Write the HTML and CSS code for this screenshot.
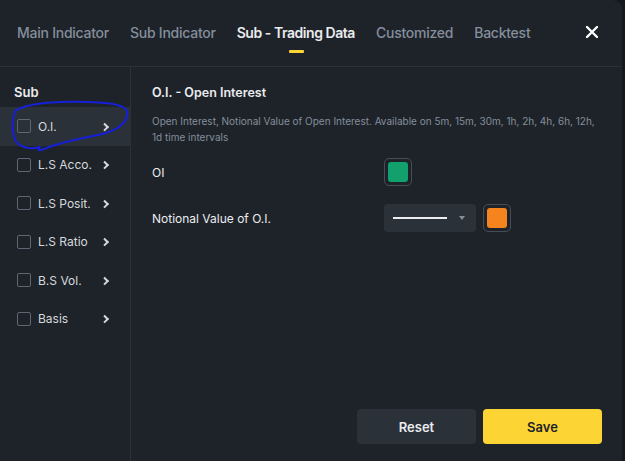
FILE: index.html
```html
<!DOCTYPE html>
<html lang="en">
<head>
  <meta charset="UTF-8">
  <meta name="viewport" content="width=device-width, initial-scale=1.0">
  <title>Sub - Trading Data</title>
  <link rel="stylesheet" href="styles.css">
</head>
<body>

  <div class="modal">

    <!-- Tabs -->
    <header class="tabs">
      <span class="tab">Main Indicator</span>
      <span class="tab">Sub Indicator</span>
      <span class="tab active">Sub - Trading Data</span>
      <span class="tab">Customized</span>
      <span class="tab">Backtest</span>
      <button class="close" aria-label="Close">
        <svg width="14" height="14" viewBox="0 0 14 14"><path d="M2 2L12 12M12 2L2 12" stroke="#fff" stroke-width="2.4" stroke-linecap="round"/></svg>
      </button>
    </header>

    <div class="main">

      <!-- Sidebar -->
      <aside class="side">
        <div class="side-title">Sub</div>
        <div class="item selected"><span class="check"></span><span class="label">O.I.</span><span class="chev"></span></div>
        <div class="item"><span class="check"></span><span class="label">L.S Acco.</span><span class="chev"></span></div>
        <div class="item"><span class="check"></span><span class="label">L.S Posit.</span><span class="chev"></span></div>
        <div class="item"><span class="check"></span><span class="label">L.S Ratio</span><span class="chev"></span></div>
        <div class="item"><span class="check"></span><span class="label">B.S Vol.</span><span class="chev"></span></div>
        <div class="item"><span class="check"></span><span class="label">Basis</span><span class="chev"></span></div>
      </aside>

      <!-- Settings -->
      <section class="content">
        <h2>O.I. - Open Interest</h2>
        <p class="desc">Open Interest, Notional Value of Open Interest. Available on 5m, 15m, 30m, 1h, 2h, 4h, 6h, 12h, 1d time intervals</p>

        <div class="settings">
          <div class="set-label">OI</div>
          <div class="set-ctrl"><span class="swatch"><span class="green"></span></span></div>

          <div class="set-label">Notional Value of O.I.</div>
          <div class="set-ctrl">
            <span class="line-select"><span class="line"></span><span class="caret"></span></span>
            <span class="swatch"><span class="orange"></span></span>
          </div>
        </div>

        <div class="footer">
          <button class="btn reset">Reset</button>
          <button class="btn save">Save</button>
        </div>
      </section>
    </div>
  </div>

  <!-- hand-drawn mark around O.I. -->
  <svg class="scribble" width="140" height="160" viewBox="0 0 140 160">
    <path d="M15 111 C28 102 68 100 106 103 C122 105 129 108 127 116 C125 125 116 131 98 135 C78 139 60 142 44 149 C39 151 37 151 40 147 C30 150 19 147 15 140 C12 131 12 120 15 111 Z" fill="none" stroke="#1620d8" stroke-width="2" stroke-linejoin="round"/>
  </svg>

</body>
</html>
```

FILE: styles.css
```css
body {
  margin: 0;
  background-color: #15181d;
  font-family: Inter, "Noto Sans", sans-serif;
  color: #eaecef;
  overflow: hidden;
  width: 625px;
  height: 461px;
}

.modal {
  width: 622px;
  height: 461px;
  background-color: #1e2329;
  border-radius: 0 9px 0 0;
  display: flex;
  flex-direction: column;
}

/* tabs */

.tabs {
  height: 67px;
  box-sizing: border-box;
  border-bottom: 1px solid #2b3139;
  display: flex;
  align-items: center;
  gap: 21px;
  padding: 0 0 2px 17px;
}

.tab {
  position: relative;
  font-size: 14px;
  font-weight: 500;
  color: #848e9c;
  letter-spacing: -0.25px;
}

.tab.active {
  color: #eaecef;
  font-weight: 600;
  letter-spacing: -0.45px;
}

.tab.active::after {
  content: "";
  position: absolute;
  left: 50%;
  top: 26px;
  width: 15px;
  height: 3px;
  margin-left: -7px;
  background-color: #fcd535;
  border-radius: 1px;
}

.close {
  margin-left: auto;
  margin-right: 23px;
  background: none;
  border: none;
  padding: 0;
  display: flex;
}

.main {
  flex: 1;
  display: flex;
}

/* sidebar */

.side {
  width: 132px;
  border-right: 1px solid #2b3139;
  padding-top: 17px;
}

.side-title {
  font-size: 13px;
  font-weight: 600;
  padding-left: 14px;
  height: 23px;
}

.item {
  height: 38.5px;
  display: flex;
  align-items: center;
  padding-left: 17px;
  font-size: 12px;
  color: #d5d8dc;
}

.item.selected {
  background-color: #2b3139;
}

.check {
  width: 12px;
  height: 12px;
  border: 1px solid #5e6673;
  border-radius: 2px;
  margin-right: 7px;
}

.label {
  flex: 1;
}

.chev {
  width: 3.5px;
  height: 3.5px;
  border-top: 2px solid #d5d8dc;
  border-right: 2px solid #d5d8dc;
  transform: rotate(45deg);
  margin-right: 23px;
}

/* content */

.content {
  flex: 1;
  padding: 18px 20px 17px 21px;
  display: flex;
  flex-direction: column;
}

h2 {
  margin: 0;
  font-size: 12.5px;
  font-weight: 600;
  line-height: 16px;
}

.desc {
  margin: 12px 0 0;
  font-size: 10px;
  line-height: 16px;
  color: #848e9c;
  width: 450px;
}

.settings {
  display: grid;
  grid-template-columns: 232px auto;
  row-gap: 18px;
  align-items: center;
  margin-top: 13px;
}

.set-label {
  font-size: 12px;
  color: #eaecef;
}

.set-ctrl {
  display: flex;
  align-items: center;
  gap: 7px;
}

.swatch {
  width: 28px;
  height: 28px;
  box-sizing: border-box;
  border: 1px solid #474d57;
  border-radius: 5px;
  padding: 3px;
  background-color: #1e2329;
}

.swatch span {
  display: block;
  width: 100%;
  height: 100%;
  border-radius: 3px;
}

.green {
  background-color: #12a06c;
}

.orange {
  background-color: #f5841f;
}

.line-select {
  width: 92px;
  height: 28px;
  box-sizing: border-box;
  background-color: #2b3139;
  border-radius: 4px;
  display: flex;
  align-items: center;
  padding: 0 11px 0 9px;
}

.line {
  width: 54px;
  height: 2px;
  background-color: #eaecef;
}

.caret {
  margin-left: auto;
  width: 0;
  height: 0;
  border-left: 3.5px solid transparent;
  border-right: 3.5px solid transparent;
  border-top: 4px solid #848e9c;
}

.footer {
  margin-top: auto;
  display: flex;
  justify-content: flex-end;
  gap: 7px;
}

.btn {
  width: 119px;
  height: 35px;
  border: none;
  border-radius: 4px;
  font-family: Inter, "Noto Sans", sans-serif;
  font-size: 13px;
  font-weight: 600;
}

.reset {
  background-color: #2b3139;
  color: #eaecef;
}

.save {
  background-color: #fcd535;
  color: #1e2329;
}

.scribble {
  position: absolute;
  left: 0;
  top: 0;
}
```
